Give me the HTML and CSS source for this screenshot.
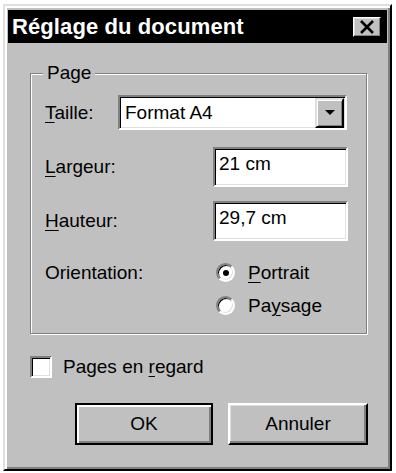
FILE: index.html
```html
<!DOCTYPE html>
<html lang="fr">
<head>
<meta charset="utf-8">
<title>Réglage du document</title>
<link rel="stylesheet" href="styles.css">
</head>
<body>
<div class="window">
  <div class="titlebar">
    <span class="title">Réglage du document</span>
    <span class="close">
      <svg width="16" height="14" viewBox="0 0 16 14"><path d="M2 1 L14 13 M14 1 L2 13" stroke="#000" stroke-width="2.6" fill="none"/></svg>
    </span>
  </div>
  <div class="content">
    <div class="group">
      <div class="legend">Page</div>
      <div class="row row-size">
        <span class="lbl lbl-short"><u>T</u>aille:</span>
        <div class="combo">
          <span class="combo-text">Format A4</span>
          <span class="combo-btn"><svg width="10" height="5" viewBox="0 0 10 5"><polygon points="0,0 10,0 5,5" fill="#000"/></svg></span>
        </div>
      </div>
      <div class="row row-width">
        <span class="lbl lbl-long"><u>L</u>argeur:</span>
        <div class="field">21 cm</div>
      </div>
      <div class="row row-height">
        <span class="lbl lbl-long"><u>H</u>auteur:</span>
        <div class="field">29,7 cm</div>
      </div>
      <div class="row row-orient">
        <span class="lbl lbl-long orient-lbl">Orientation:</span>
        <div class="radios">
          <div class="radio-row"><span class="radio checked"></span><span><u>P</u>ortrait</span></div>
          <div class="radio-row"><span class="radio"></span><span>Pa<u>y</u>sage</span></div>
        </div>
      </div>
    </div>
    <div class="check-row"><span class="checkbox"></span><span>Pages en <u>r</u>egard</span></div>
    <div class="buttons">
      <div class="btn default">OK</div>
      <div class="btn">Annuler</div>
    </div>
  </div>
</div>
</body>
</html>
```

FILE: styles.css
```css
html, body {
  margin: 0;
  padding: 0;
  background: #fff;
}
body {
  font-family: "Liberation Sans", Arial, sans-serif;
  font-size: 19px;
  color: #000;
}
u {
  text-decoration-thickness: 1px;
  text-underline-offset: 3px;
}
.window {
  margin: 4px 0 0 3px;
  width: 389px;
  height: 467px;
  box-sizing: border-box;
  background: #c0c0c0;
  border: 2px solid;
  border-color: #dfdfdf #000 #000 #dfdfdf;
  box-shadow: inset 2px 2px 0 #fff, inset -2px -2px 0 #808080;
  padding: 4px 3px 3px 3px;
}
.titlebar {
  height: 33px;
  background: #000;
  display: flex;
  align-items: center;
  justify-content: space-between;
  padding: 0 6px 0 4px;
}
.title {
  color: #fff;
  font-weight: bold;
  font-size: 22px;
  line-height: 33px;
  letter-spacing: 0.1px;
}
.close {
  width: 28px;
  height: 20px;
  box-sizing: border-box;
  background: #c0c0c0;
  border: 1px solid;
  border-color: #fff #000 #000 #fff;
  box-shadow: inset -1px -1px 0 #808080, inset 1px 1px 0 #dfdfdf;
  display: flex;
  align-items: center;
  justify-content: center;
  margin-top: 1px;
}
.close svg { display: block; }
.content {
  display: flex;
  flex-direction: column;
}
.group {
  margin: 30px 0 0 22px;
  width: 337px;
  box-sizing: border-box;
  border: 1px solid #808080;
  box-shadow: inset 1px 1px 0 #fff, 1px 1px 0 #fff;
  padding: 0 0 11px 14px;
  display: flex;
  flex-direction: column;
}
.legend {
  align-self: flex-start;
  margin: -11px 0 0 -2px;
  padding: 0 4px;
  height: 20px;
  line-height: 20px;
  background: #c0c0c0;
}
.row {
  display: flex;
  align-items: center;
}
.row-size { margin-top: 12px; }
.row-width { margin-top: 17px; }
.row-height { margin-top: 14px; }
.row-orient { margin-top: 15px; align-items: flex-start; }
.lbl { flex: none; }
.lbl-short { width: 73px; }
.lbl-long { width: 168px; }
.orient-lbl { line-height: 33px; width: 171px; }
.combo {
  width: 229px;
  height: 35px;
  box-sizing: border-box;
  background: #fff;
  border: 2px solid;
  border-color: #808080 #fff #fff #808080;
  box-shadow: inset 1px 1px 0 #000, inset -1px -1px 0 #dfdfdf;
  display: flex;
  align-items: center;
}
.combo-text {
  flex: 1;
  padding-left: 5px;
  line-height: 22px;
}
.combo-btn {
  width: 29px;
  height: 30px;
  margin-right: 1px;
  box-sizing: border-box;
  background: #c0c0c0;
  border: 2px solid;
  border-color: #dfdfdf #000 #000 #dfdfdf;
  box-shadow: inset 1px 1px 0 #fff, inset -1px -1px 0 #808080;
  display: flex;
  align-items: center;
  justify-content: center;
}
.combo-btn svg { display: block; }
.field {
  width: 135px;
  height: 40px;
  box-sizing: border-box;
  background: #fff;
  border: 2px solid;
  border-color: #808080 #fff #fff #808080;
  box-shadow: inset 1px 1px 0 #000, inset -1px -1px 0 #dfdfdf;
  padding: 4px 4px 0 4px;
  line-height: 22px;
}
.radios {
  display: flex;
  flex-direction: column;
}
.radio-row {
  height: 33px;
  display: flex;
  align-items: center;
  gap: 13px;
}
.radio {
  width: 19px;
  height: 19px;
  box-sizing: border-box;
  border-radius: 50%;
  background: #fff;
  border: 2px solid;
  border-color: #808080 #fff #fff #808080;
  box-shadow: inset 1px 1px 0 #000, inset -1px -1px 0 #dfdfdf;
  display: flex;
  align-items: center;
  justify-content: center;
  flex: none;
}
.radio.checked::after {
  content: "";
  width: 6px;
  height: 6px;
  border-radius: 50%;
  background: #000;
}
.check-row {
  margin: 22px 0 0 22px;
  display: flex;
  align-items: center;
  gap: 11px;
  height: 22px;
}
.checkbox {
  width: 22px;
  height: 22px;
  box-sizing: border-box;
  background: #fff;
  border: 2px solid;
  border-color: #808080 #fff #fff #808080;
  box-shadow: inset 1px 1px 0 #000, inset -1px -1px 0 #dfdfdf;
  flex: none;
}
.buttons {
  margin-top: 25px;
  padding-left: 67px;
  display: flex;
  gap: 15px;
}
.btn {
  width: 140px;
  height: 42px;
  box-sizing: border-box;
  border: 2px solid;
  border-color: #fff #000 #000 #fff;
  box-shadow: inset -2px -2px 0 #808080, inset 1px 1px 0 #dfdfdf;
  display: flex;
  align-items: center;
  justify-content: center;
}
.btn.default {
  width: 138px;
  border-color: #000;
  box-shadow: inset 2px 2px 0 #fff, inset -2px -2px 0 #808080;
}
```
